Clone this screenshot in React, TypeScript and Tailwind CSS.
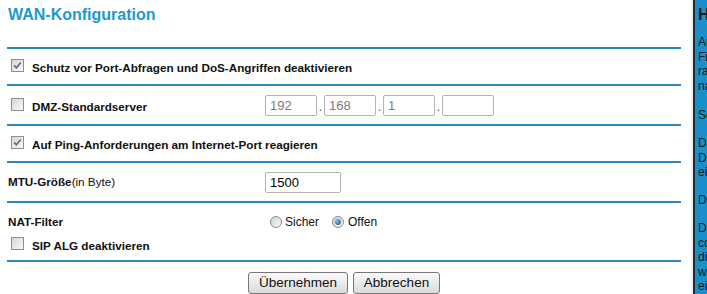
import React from "react";

const font = { fontFamily: '"Liberation Sans", Arial, sans-serif' };

function Check({ checked = false }: { checked?: boolean }) {
  return (
    <span className="mb-[5px] ml-[4px] mr-[8px] inline-flex h-[13px] w-[13px] shrink-0 items-center justify-center border border-[#8e8f8f] bg-linear-to-br from-[#d6d6d6] to-[#fafafa]">
      {checked && (
        <svg width="11" height="11" viewBox="0 0 11 11">
          <path d="M2.2 5.4 L4.4 7.7 L8.8 2.6" fill="none" stroke="#56698a" strokeWidth="1.6" />
        </svg>
      )}
    </span>
  );
}

function Radio({ checked = false }: { checked?: boolean }) {
  return (
    <span className="inline-flex h-[12px] w-[12px] shrink-0 items-center justify-center rounded-full border border-[#8a8a8a] bg-linear-to-br from-[#d2d2d2] to-[#fbfbfb]">
      {checked && (
        <span className="h-[6px] w-[6px] rounded-full bg-radial-[at_35%_35%] from-[#7fc0ea] to-[#1a4f7a]" />
      )}
    </span>
  );
}

function Rule() {
  return <div className="h-[2px] bg-[#2a8bb8]" />;
}

function Field({ value, width, muted }: { value: string; width: string; muted?: boolean }) {
  return (
    <input
      readOnly
      value={value}
      className={`h-[21px] ${width} rounded-[2px] border border-[#b4b4b4] bg-white px-[4px] text-[13px] outline-none ${
        muted ? "text-[#7c7c7c]" : "text-black"
      }`}
      style={font}
    />
  );
}

function Dot() {
  return <span className="w-[7px] self-end pb-[1px] text-center text-[12px] leading-[16px] text-[#444]">.</span>;
}

function Button({ label, width }: { label: string; width: string }) {
  return (
    <button
      className={`h-[22px] ${width} rounded-[3px] border border-[#777] bg-linear-to-b from-[#fbfbfb] to-[#dadada] text-[13.5px] text-[#111]`}
      style={font}
    >
      {label}
    </button>
  );
}

export default function App() {
  return (
    <div className="flex h-[294px] w-[707px] overflow-hidden bg-white text-[11.7px] text-[#111]" style={font}>
      <main className="flex-1 pl-[7px] pr-[9px]">
        <h1 className="h-[47px] pl-[1px] pt-[5px] text-[16px] font-bold leading-[20px] text-[#1b9ad2]">
          WAN-Konfiguration
        </h1>
        <Rule />

        {/* Port-Abfragen */}
        <div className="flex h-[35px] items-center pt-[3px] font-bold leading-[14px]">
          <Check checked />
          Schutz vor Port-Abfragen und DoS-Angriffen deaktivieren
        </div>
        <Rule />

        {/* DMZ */}
        <div className="flex h-[38px] items-center">
          <div className="flex w-[258px] items-center pt-[4px] font-bold leading-[14px]">
            <Check />
            DMZ-Standardserver
          </div>
          <div className="flex items-center">
            <Field value="192" width="w-[52px]" muted />
            <Dot />
            <Field value="168" width="w-[52px]" muted />
            <Dot />
            <Field value="1" width="w-[52px]" muted />
            <Dot />
            <Field value="" width="w-[52px]" muted />
          </div>
        </div>
        <Rule />

        {/* Ping */}
        <div className="flex h-[35px] items-center pt-[3px] font-bold leading-[14px]">
          <Check checked />
          Auf Ping-Anforderungen am Internet-Port reagieren
        </div>
        <Rule />

        {/* MTU */}
        <div className="flex h-[38px] items-center">
          <div className="w-[258px] pl-[1px] leading-[14px]">
            <span className="font-bold">MTU-Größe</span>(in Byte)
          </div>
          <Field value="1500" width="w-[76px]" />
        </div>
        <Rule />

        {/* NAT */}
        <div className="flex h-[57px] flex-col pt-[9px]">
          <div className="flex h-[20px] items-center">
            <div className="w-[258px] pl-[1px] font-bold leading-[14px]">NAT-Filter</div>
            <div className="flex items-center pl-[5px] text-[12px]">
              <Radio />
              <span className="ml-[3px] mr-[13px]">Sicher</span>
              <Radio checked />
              <span className="ml-[4px]">Offen</span>
            </div>
          </div>
          <div className="mt-[3px] flex h-[20px] items-center pt-[2px] font-bold leading-[14px]">
            <Check />
            SIP ALG deaktivieren
          </div>
        </div>
        <Rule />

        <div className="flex justify-center gap-[5px] pt-[10px]">
          <Button label="Übernehmen" width="w-[100px]" />
          <Button label="Abbrechen" width="w-[87px]" />
        </div>
      </main>

      <div className="w-[3px] bg-linear-to-r from-white to-[#e6e8e8]" />

      {/* Hilfe */}
      <aside className="w-[14px] shrink-0 overflow-hidden whitespace-nowrap border-l-2 border-[#1b2b35] bg-[#1b8fc9] pl-[3px] text-[12px] leading-[14.5px] text-[#101820]">
        <div className="pt-[6px] text-[16px] font-bold leading-[18px]">Hilfe</div>
        <div className="mt-[11px]">
          <div>Auf dieser Seite können Sie</div>
          <div>Firewall-Einstellungen für</div>
          <div>radikale Änderungen</div>
          <div>nach Bedarf vornehmen.</div>
        </div>
        <div className="mt-[14.5px]">Schutz vor Port-Abfragen</div>
        <div className="mt-[14px]">
          <div>Die Firewall schützt</div>
          <div>Das Netzwerk gegen</div>
          <div>eingehende Angriffe.</div>
        </div>
        <div className="mt-[13.5px]">DMZ-Standardserver</div>
        <div className="mt-[13.5px]">
          <div>Der DMZ-Server kann</div>
          <div>computer im Netzwerk</div>
          <div>direkt erreichbar machen,</div>
          <div>wenn Anwendungen</div>
          <div>eingehende Verbindungen</div>
        </div>
      </aside>
    </div>
  );
}
